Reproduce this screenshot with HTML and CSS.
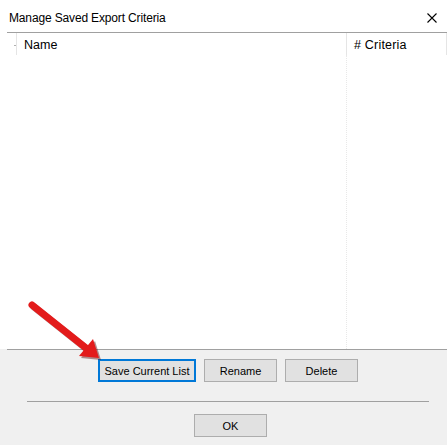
FILE: index.html
```html
<!DOCTYPE html>
<html>
<head>
<meta charset="utf-8">
<link rel="stylesheet" href="styles.css">
</head>
<body>
<div class="dialog">
  <div class="titlebar">
    <span class="title">Manage Saved Export Criteria</span>
    <svg class="close" width="10" height="10" viewBox="0 0 10 10"><path d="M0.5 0.5L9.5 9.5M9.5 0.5L0.5 9.5" stroke="#000" stroke-width="1.1"/></svg>
  </div>
  <div class="list">
    <div class="header">
      <div class="col-tick"><span class="tick-dash"></span></div>
      <div class="col-name">Name</div>
      <div class="col-crit">
        <span>#&nbsp;Criteria</span>
      </div>
    </div>
    <div class="body">
      <div class="body-name"></div>
      <div class="body-crit"></div>
    </div>
  </div>
  <div class="footer">
    <div class="btn-row">
      <button class="btn btn-default">Save Current List</button>
      <button class="btn">Rename</button>
      <button class="btn">Delete</button>
    </div>
    <div class="sep"></div>
    <div class="ok-row">
      <button class="btn">OK</button>
    </div>
  </div>
  <svg class="arrow" width="120" height="80" viewBox="0 0 120 80">
    <g transform="translate(2,2)" fill="#5a1010" opacity="0.45">
      <line x1="32" y1="5" x2="86" y2="48" stroke="#5a1010" stroke-width="7" stroke-linecap="round"/>
      <polygon points="99,58 79,56 93,39"/>
    </g>
    <line x1="32" y1="5" x2="86" y2="48" stroke="#e31b1b" stroke-width="7" stroke-linecap="round"/>
    <polygon points="99,58 79,56 93,39" fill="#e31b1b"/>
  </svg>
</div>
</body>
</html>
```

FILE: styles.css
```css
html, body {
  margin: 0;
  padding: 0;
}
body {
  width: 447px;
  height: 445px;
  overflow: hidden;
  background: #ffffff;
  font-family: "Liberation Sans", Arial, sans-serif;
  font-size: 12px;
  color: #000;
}
.dialog {
  position: relative;
  width: 447px;
  height: 445px;
  display: flex;
  flex-direction: column;
}
.titlebar {
  height: 33px;
  margin-left: 7px;
  padding-left: 2px;
  padding-top: 4px;
  box-sizing: border-box;
  border-bottom: 1px solid #a0a0a0;
  display: flex;
  align-items: center;
  justify-content: space-between;
  flex: none;
}
.title {
  font-size: 12px;
  letter-spacing: -0.15px;
}
.close {
  margin-right: 10px;
  margin-top: 0;
}
.list {
  flex: 1;
  display: flex;
  flex-direction: column;
  margin-left: 7px;
}
.header {
  height: 22px;
  display: flex;
  flex: none;
  font-size: 12.5px;
}
.col-tick {
  width: 9px;
  border-right: 1px solid #e5e5e5;
  display: flex;
  justify-content: flex-end;
  align-items: center;
}
.tick-dash {
  width: 2px;
  height: 1px;
  background: #b0b0b0;
  margin-top: 2px;
}
.col-name {
  width: 330px;
  padding-left: 7px;
  padding-top: 5px;
  border-right: 1px solid #e5e5e5;
  box-sizing: border-box;
}
.col-crit {
  flex: 1;
  padding-left: 7px;
  padding-top: 5px;
  border-right: 1px solid #e5e5e5;
  letter-spacing: 0.2px;
}
.body {
  flex: 1;
  display: flex;
}
.body-name {
  width: 339px;
  border-right: 1px dotted #e8e8e8;
}
.body-crit {
  flex: 1;
}
.footer {
  height: 96px;
  flex: none;
  background: #f0f0f0;
  display: flex;
  flex-direction: column;
}
.footer::before {
  content: "";
  display: block;
  height: 1px;
  margin-left: 7px;
  background: #a0a0a0;
}
.btn-row {
  display: flex;
  gap: 8px;
  padding-left: 98px;
  margin-top: 9px;
}
.btn {
  width: 73px;
  height: 23px;
  box-sizing: border-box;
  background: #e1e1e1;
  border: 1px solid #adadad;
  font-family: "Liberation Sans", Arial, sans-serif;
  font-size: 11px;
  color: #000;
  padding: 0;
  margin: 0;
}
.btn-default {
  width: 98px;
  border: 2px solid #0078d7;
  font-size: 11px;
}
.sep {
  height: 1px;
  background: #a0a0a0;
  margin: 19px 18px 0 27px;
}
.ok-row {
  display: flex;
  padding-left: 194px;
  margin-top: 12px;
}
.arrow {
  position: absolute;
  left: 0;
  top: 300px;
}
```
